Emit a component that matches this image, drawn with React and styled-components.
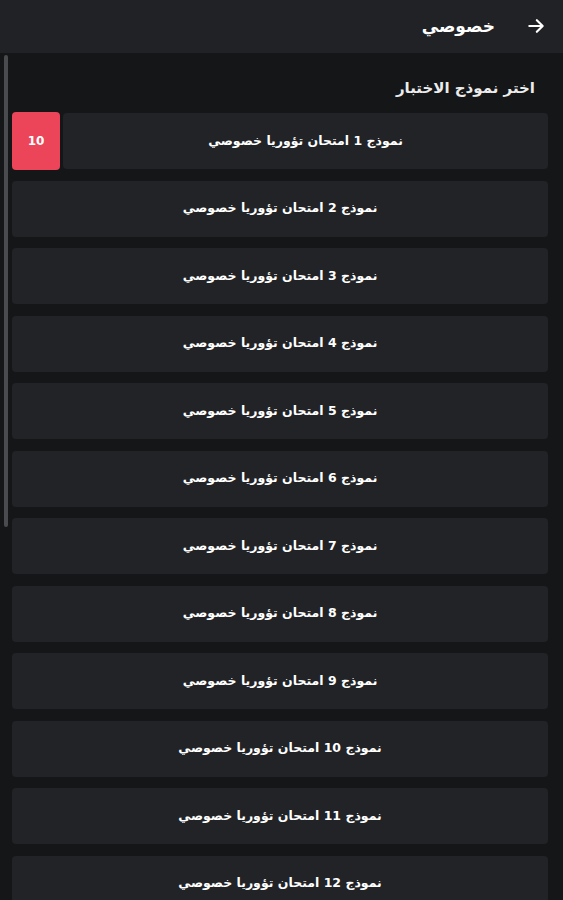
import styled, { createGlobalStyle } from "styled-components";

const GlobalStyle = createGlobalStyle`
  html, body {
    margin: 0;
    padding: 0;
    background: #151618;
  }
  body {
    font-family: "DejaVu Sans", "Noto Sans", sans-serif;
  }
`;

const models = Array.from({ length: 12 }, (_, i) => i + 1);

export default function App() {
  return (
    <Page dir="rtl">
      <GlobalStyle />
      <Header>
        <BackButton>
          <svg width="20" height="20" viewBox="0 0 24 24" fill="none" stroke="#ffffff" strokeWidth="2.6" strokeLinecap="round" strokeLinejoin="round">
            <path d="M4 12h15" />
            <path d="M13 5l7 7-7 7" />
          </svg>
        </BackButton>
        <HeaderTitle>خصوصي</HeaderTitle>
      </Header>

      <Content>
        <Scrollbar />
        <SectionTitle>اختر نموذج الاختبار</SectionTitle>
        <List>
          {models.map((n) => (
            <Row key={n}>
              <Card>
                <CardText>نموذج {n} امتحان تؤوريا خصوصي</CardText>
              </Card>
              {n === 1 && <Badge>10</Badge>}
            </Row>
          ))}
        </List>
      </Content>
    </Page>
  );
}

const Page = styled.div`
  width: 563px;
  min-height: 900px;
  background: #151618;
  color: #ffffff;
`;

const Header = styled.div`
  height: 53px;
  background: #212225;
  display: flex;
  align-items: center;
  padding: 0 16px;
  gap: 30px;
`;

const BackButton = styled.div`
  display: flex;
  align-items: center;
  justify-content: center;
  width: 22px;
  height: 22px;
  margin-top: -2px;
`;

const HeaderTitle = styled.div`
  font-size: 17px;
  font-weight: bold;
  color: #ffffff;
  margin-top: -2px;
`;

const Content = styled.div`
  position: relative;
  padding: 0 15px 0 15px;
`;

const Scrollbar = styled.div`
  position: absolute;
  left: 4px;
  top: 2px;
  width: 4px;
  height: 472px;
  background: #4a4b4e;
  border-radius: 2px;
`;

const SectionTitle = styled.div`
  font-size: 15px;
  font-weight: bold;
  color: #ececec;
  padding: 26px 13px 0 0;
  height: 34px;
`;

const List = styled.div`
  display: flex;
  flex-direction: column;
  gap: 11.5px;
  margin-left: -3px;
`;

const Row = styled.div`
  display: flex;
  gap: 3px;
  height: 56px;
`;

const Card = styled.div`
  flex: 1;
  background: #222326;
  border-radius: 4px;
  display: flex;
  align-items: center;
  justify-content: center;
`;

const CardText = styled.div`
  font-size: 12.5px;
  font-weight: bold;
  color: #ffffff;
  margin-top: -2px;
`;

const Badge = styled.div`
  width: 48px;
  margin: -1px 0;
  background: #ec4458;
  border-radius: 4px;
  display: flex;
  align-items: center;
  justify-content: center;
  font-size: 12px;
  font-weight: bold;
  color: #ffffff;
`;
